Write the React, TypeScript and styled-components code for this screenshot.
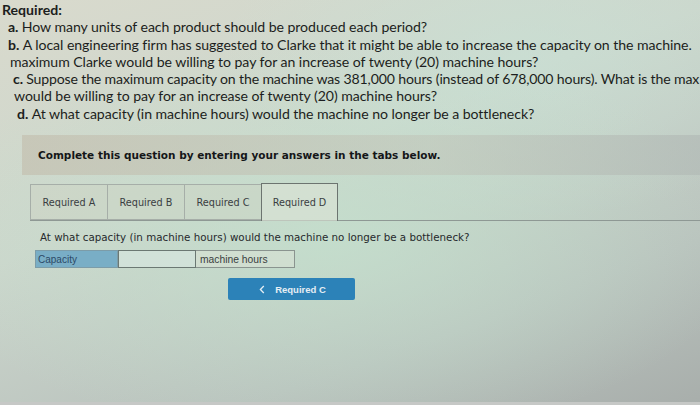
import styled, { createGlobalStyle } from 'styled-components';

const GlobalStyle = createGlobalStyle`
  html, body {
    margin: 0;
    padding: 0;
  }
  body {
    width: 700px;
    height: 405px;
    overflow: hidden;
  }
`;

const parts = [
  { tag: 'a.', text: 'How many units of each product should be produced each period?', indent: 8, tight: 0 },
  {
    tag: 'b.',
    text: 'A local engineering firm has suggested to Clarke that it might be able to increase the capacity on the machine.',
    indent: 8,
    tight: 0,
  },
  { text: 'maximum Clarke would be willing to pay for an increase of twenty (20) machine hours?', indent: 10, tight: 0 },
  {
    tag: 'c.',
    text: 'Suppose the maximum capacity on the machine was 381,000 hours (instead of 678,000 hours). What is the max',
    indent: 13,
    tight: 0.1,
  },
  { text: 'would be willing to pay for an increase of twenty (20) machine hours?', indent: 14, tight: 0 },
  {
    tag: 'd.',
    text: 'At what capacity (in machine hours) would the machine no longer be a bottleneck?',
    indent: 17,
    tight: 0,
  },
];

const tabs = ['Required A', 'Required B', 'Required C', 'Required D'];

const App = () => {
  return (
    <>
      <GlobalStyle />
      <Page>
        <Requirements>
          <Heading>Required:</Heading>
          {parts.map((p, i) => (
            <Line key={i} $indent={p.indent} $tight={p.tight}>
              {p.tag && <Tag>{p.tag} </Tag>}
              {p.text}
            </Line>
          ))}
        </Requirements>

        <Instruction>Complete this question by entering your answers in the tabs below.</Instruction>

        <TabBar>
          {tabs.map((t) => (
            <Tab key={t} $active={t === 'Required D'}>
              {t}
            </Tab>
          ))}
        </TabBar>

        <Question>At what capacity (in machine hours) would the machine no longer be a bottleneck?</Question>

        <AnswerRow>
          <Label>Capacity</Label>
          <Input type="text" />
          <Unit>machine hours</Unit>
        </AnswerRow>

        <Nav>
          <PrevButton>
            <svg width="6" height="9" viewBox="0 0 6 9" fill="none">
              <path d="M4.8 1 L1.4 4.5 L4.8 8" stroke="currentColor" strokeWidth="1.3" />
            </svg>
            Required C
          </PrevButton>
        </Nav>

        <BottomEdge />
      </Page>
    </>
  );
};

const Page = styled.div`
  position: relative;
  width: 700px;
  height: 405px;
  box-sizing: border-box;
  padding-top: 1px;
  display: flex;
  flex-direction: column;
  background:
    radial-gradient(ellipse 420px 200px at 330px 240px, rgba(196, 226, 206, 0.75), rgba(196, 226, 206, 0) 100%),
    radial-gradient(ellipse 300px 160px at 520px 60px, rgba(200, 226, 214, 0.6), rgba(200, 226, 214, 0) 100%),
    linear-gradient(160deg, #d9dacd 0%, #ccd6cc 40%, #b9c2bd 75%, #a8aeab 100%);
  font-family: Lato, 'Open Sans', sans-serif;
  color: #1c1e20;
`;

const Requirements = styled.div`
  padding-left: 2px;
  font-size: 14.1px;
  line-height: 17.3px;
`;

const Heading = styled.div`
  font-weight: 700;
`;

const Line = styled.div<{ $indent: number; $tight: number }>`
  padding-left: ${(p) => p.$indent - 2}px;
  white-space: nowrap;
  letter-spacing: ${(p) => -0.05 - p.$tight}px;
`;

const Tag = styled.span`
  font-weight: 700;
`;

const Instruction = styled.div`
  margin: 13px 0 0 22px;
  height: 40px;
  display: flex;
  align-items: center;
  padding-left: 16px;
  background: linear-gradient(90deg, rgba(196, 192, 176, 0.7), rgba(192, 196, 184, 0.55) 60%, rgba(178, 186, 182, 0.7));
  font-family: 'DejaVu Sans', Verdana, sans-serif;
  font-size: 10.5px;
  font-weight: 700;
  color: #141618;
`;

const TabBar = styled.div`
  margin: 8px 0 0 30px;
  display: flex;
  align-items: flex-end;
  border-bottom: 1px solid #8e9894;
`;

const Tab = styled.div<{ $active?: boolean }>`
  width: 77px;
  height: ${(p) => (p.$active ? 38 : 36)}px;
  margin-bottom: ${(p) => (p.$active ? -1 : 0)}px;
  box-sizing: border-box;
  display: flex;
  align-items: center;
  justify-content: center;
  border: 1px solid ${(p) => (p.$active ? '#6c7470' : '#a6aea8')};
  border-bottom: ${(p) => (p.$active ? 'none' : '1px solid #a6aea8')};
  border-right-width: ${(p) => (p.$active ? 1 : 0)}px;
  background: ${(p) => (p.$active ? 'rgba(220, 226, 214, 0.6)' : 'rgba(206, 208, 192, 0.35)')};
  font-family: 'DejaVu Sans', Verdana, sans-serif;
  font-size: 9.7px;
  color: #3a3e42;
`;

const Question = styled.div`
  margin: 10px 0 0 40px;
  font-family: 'DejaVu Sans', Verdana, sans-serif;
  font-size: 10.3px;
  line-height: 12px;
  color: #26292c;
`;

const AnswerRow = styled.div`
  margin: 7px 0 0 35px;
  display: flex;
  height: 18px;
`;

const Label = styled.div`
  width: 83px;
  box-sizing: border-box;
  padding-left: 2px;
  display: flex;
  align-items: center;
  background: #79aec6;
  border: 1px solid #7c9ca8;
  font-family: 'Liberation Sans', Arial, sans-serif;
  font-size: 10px;
  color: #2c4a66;
`;

const Input = styled.input`
  width: 78px;
  height: 18px;
  box-sizing: border-box;
  margin: 0;
  padding: 0;
  border: 1px solid #6b7873;
  background: rgba(214, 230, 222, 0.7);
  outline: none;
`;

const Unit = styled.div`
  width: 99px;
  box-sizing: border-box;
  padding-left: 4px;
  display: flex;
  align-items: center;
  border: 1px solid #8a948f;
  border-left: none;
  background: rgba(218, 226, 214, 0.55);
  font-family: 'Liberation Sans', Arial, sans-serif;
  font-size: 10.3px;
  color: #3a3e40;
`;

const Nav = styled.div`
  margin: 10px 0 0 228px;
  display: flex;
`;

const PrevButton = styled.button`
  width: 127px;
  height: 22px;
  display: flex;
  align-items: center;
  justify-content: center;
  gap: 10px;
  border: none;
  border-radius: 2px;
  background: #2c82b8;
  color: #e6eef4;
  font-family: 'Liberation Sans', Arial, sans-serif;
  font-size: 9.5px;
  font-weight: 700;
  padding: 0 0 0 2px;
`;

const BottomEdge = styled.div`
  margin-top: auto;
  height: 3px;
  background: #c6c8c6;
`;

export default App;
